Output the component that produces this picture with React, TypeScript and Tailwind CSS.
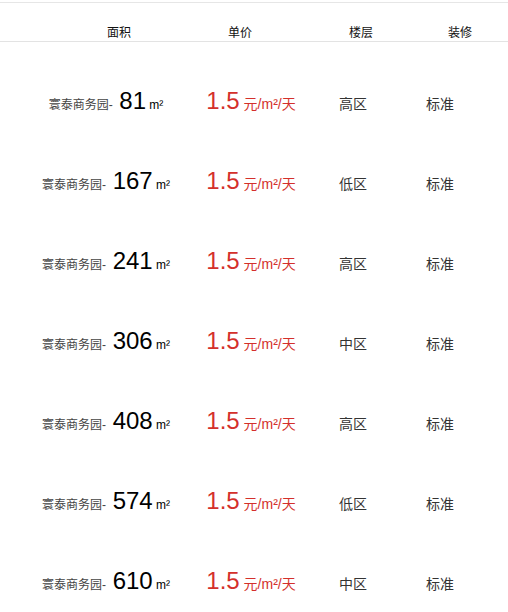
const rows = [
  { area: 81, floor: "高区" },
  { area: 167, floor: "低区" },
  { area: 241, floor: "高区" },
  { area: 306, floor: "中区" },
  { area: 408, floor: "高区" },
  { area: 574, floor: "低区" },
  { area: 610, floor: "中区" },
];

export default function App() {
  return (
    <div
      className="h-[612px] w-[508px] overflow-hidden bg-white"
      style={{ fontFamily: '"Liberation Sans", "Noto Sans CJK SC", sans-serif' }}
    >
      <div className="mt-[2px] border-t border-[#e6e6e6]" />

      <div className="flex h-[39px] items-end border-b border-[#e3e3e3] text-[12px] leading-4 text-[#111]">
        <div className="ml-[58px] w-[122px] text-center">面积</div>
        <div className="w-[120px] text-center">单价</div>
        <div className="w-[122px] text-center">楼层</div>
        <div className="w-[76px] text-center">装修</div>
      </div>

      <div className="pt-[20px]">
        {rows.map((row) => (
          <div key={row.area} className="flex h-[80px] items-baseline pt-[27px]">
            <div className="ml-[8px] w-[196px] text-center leading-none">
              <span className="text-[12px] text-[#444]">寰泰商务园-</span>
              <span className="text-[24px] text-black"> {row.area}</span>
              <span className="text-[12px] text-black"> m²</span>
            </div>
            <div className="w-[94px] text-center leading-none text-[#d4302b]">
              <span className="text-[24px]">1.5</span>
              <span className="text-[14px]"> 元/m²/天</span>
            </div>
            <div className="w-[110px] text-center text-[14px] leading-none text-[#333]">
              {row.floor}
            </div>
            <div className="w-[64px] text-center text-[14px] leading-none text-[#333]">
              标准
            </div>
          </div>
        ))}
      </div>
    </div>
  );
}
